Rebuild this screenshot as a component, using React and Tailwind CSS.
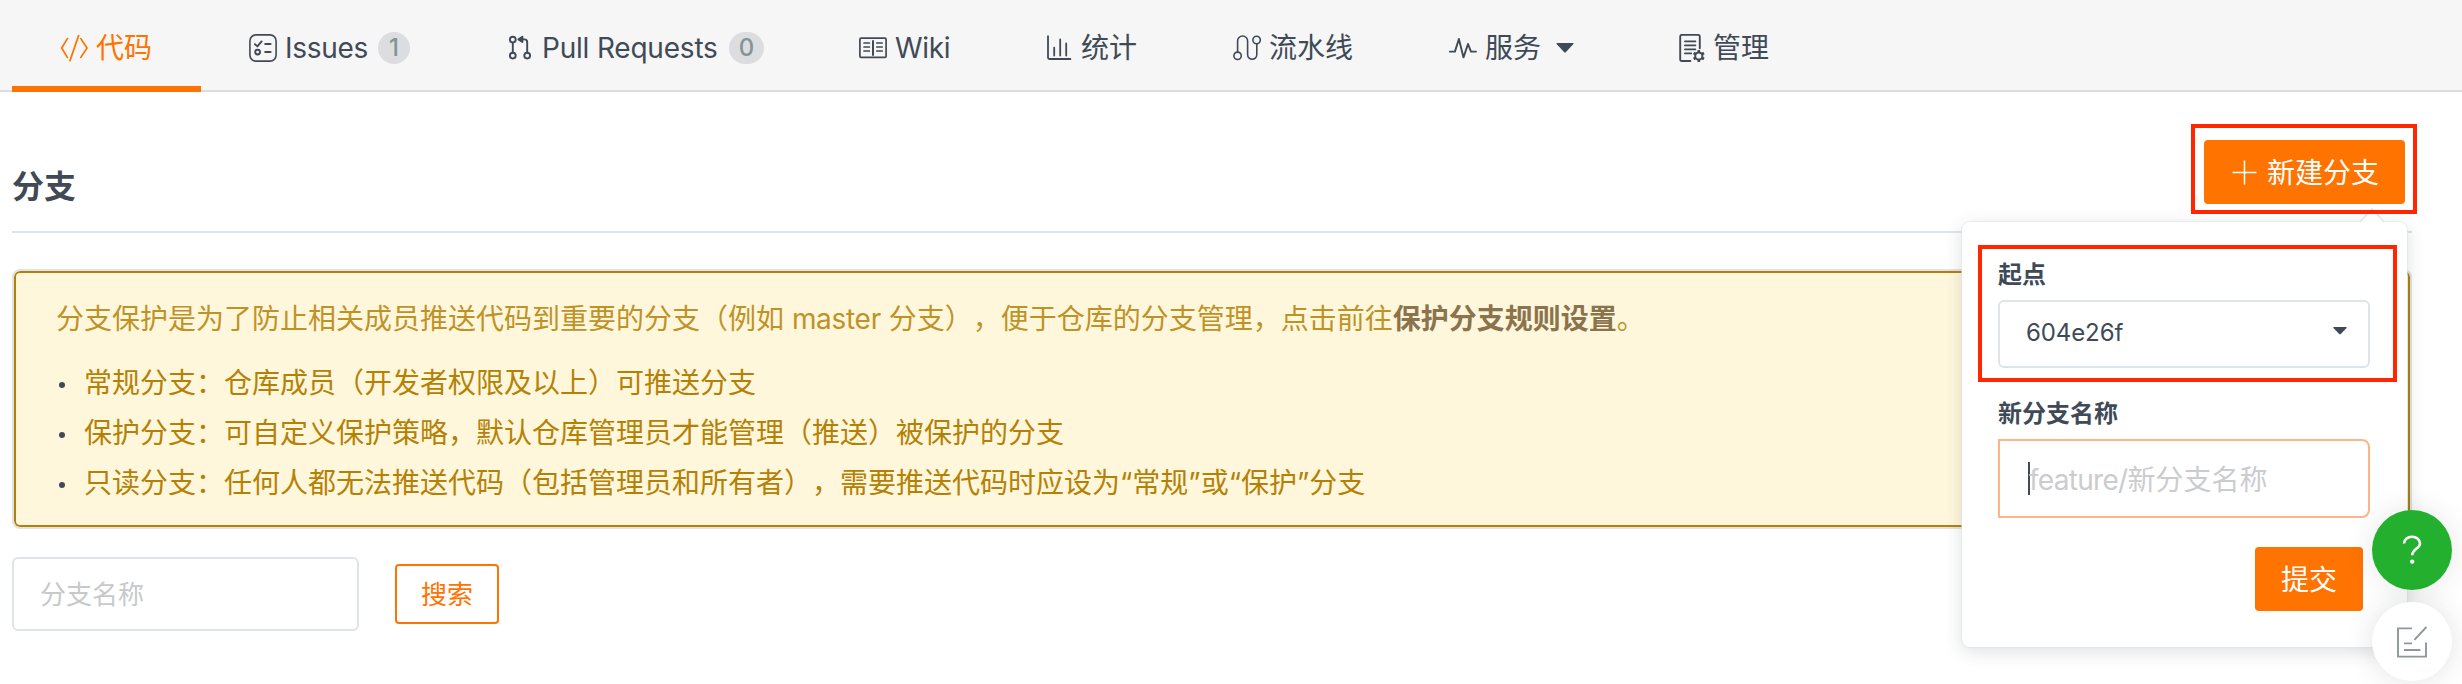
import React from "react";

const stroke = { fill: "none", stroke: "currentColor", strokeWidth: 1.8, strokeLinecap: "round", strokeLinejoin: "round" };

function Icon({ children, ...rest }) {
  return (
    <svg width="28" height="28" viewBox="0 0 28 28" className="shrink-0" {...stroke} {...rest}>
      {children}
    </svg>
  );
}

const CodeIcon = () => (
  <Icon strokeWidth="1.7">
    <path d="M7.4 4.6 1.7 14l5.7 9.4M20.8 4.6 27 14l-6.2 9.4M18.6 1.6 10 26.6" />
  </Icon>
);

const IssuesIcon = () => (
  <Icon strokeWidth="1.6">
    <rect x="0.9" y="0.9" width="26.2" height="26.2" rx="6" />
    <path strokeWidth="1.9" d="M6 10.2l2.4 2.2 4.2-5M16.2 10h5.4M16.2 18h5.4" />
    <circle cx="8.6" cy="18.1" r="2.4" strokeWidth="1.9" />
  </Icon>
);

const PullIcon = () => (
  <Icon strokeWidth="1.9">
    <circle cx="6.8" cy="5.6" r="2.9" />
    <circle cx="6.8" cy="21.6" r="2.9" />
    <circle cx="21.2" cy="21.6" r="2.9" />
    <path d="M6.8 8.6v10M21.2 18.6V8.2a2.8 2.8 0 0 0-2.8-2.8H15.6" />
    <path d="M16.4 2.8v5.2l-4-2.6z" fill="currentColor" />
  </Icon>
);

const WikiIcon = () => (
  <Icon strokeWidth="1.7">
    <rect x="0.9" y="4.2" width="26.2" height="19.2" rx="1.2" />
    <path strokeWidth="2" d="M14 7v14" />
    <path d="M5 9h5.4M5 13h5.4M5 17h5.4M17.8 9h5.4M17.8 13h5.4M17.8 17h5.4" />
  </Icon>
);

const StatsIcon = () => (
  <Icon strokeWidth="1.8">
    <path d="M3 2.2v21.4q0 1.4 1.4 1.4h21M9.2 21.6v-8M15.2 21.6V5.4M21.2 21.6V9.4" />
  </Icon>
);

const PipelineIcon = () => (
  <Icon strokeWidth="1.6">
    <circle cx="4.6" cy="21.8" r="3.7" />
    <circle cx="23.6" cy="6" r="3.7" />
    <path d="M4.6 18V7a5 5 0 0 1 10 0v13.6a4.6 4.6 0 0 0 9.2 0V9.8" />
  </Icon>
);

const PulseIcon = () => (
  <Icon strokeWidth="1.9">
    <path d="M.9 17.6h5L9.9 5l4.6 18.4L19 10l3 7.6h5" />
  </Icon>
);

const ManageIcon = () => (
  <Icon strokeWidth="1.9">
    <path d="M13.4 27H5q-1.8 0-1.8-1.8V2.8Q3.2.9 5 .9h16q1.8 0 1.8 1.8v11.6" />
    <path strokeWidth="1.8" d="M8 7.4h10.4M8 11.4h10.4M8 15.4h10.4M8 19.4h6.2" />
    <circle cx="21.8" cy="22" r="3.6" strokeWidth="2" />
    <path strokeWidth="2.6" strokeLinecap="butt" d="M21.8 16v2.4M21.8 25.6V28M16.6 19l2.1 1.2M24.9 23.8l2.1 1.2M16.6 25l2.1-1.2M24.9 20.2l2.1-1.2" />
  </Icon>
);

function Caret({ className }) {
  return (
    <svg viewBox="0 0 18 10" className={className} fill="currentColor">
      <path d="M1 0h16q1 0 .4 1L10 9q-1 1-2 0L.6 1Q0 0 1 0z" />
    </svg>
  );
}

function Badge({ className, children }) {
  return (
    <span className={"flex h-8 items-center justify-center rounded-full bg-[#dcdde0] text-[24px] font-medium text-[#879296] " + className}>
      {children}
    </span>
  );
}

function NavItem({ icon, label, className, labelClass = "", active, children }) {
  return (
    <a
      className={
        "flex h-[92px] shrink-0 items-center border-b-[6px] pl-12 whitespace-nowrap " +
        (active ? "border-[#ff7300] text-[#ff7300] " : "border-transparent ") +
        className
      }
    >
      <span className="flex items-center pt-[9px]">
        {icon}
        <span className={"ml-2 leading-7 " + labelClass}>{label}</span>
        {children}
      </span>
    </a>
  );
}

const rules = [
  "常规分支：仓库成员（开发者权限及以上）可推送分支",
  "保护分支：可自定义保护策略，默认仓库管理员才能管理（推送）被保护的分支",
  "只读分支：任何人都无法推送代码（包括管理员和所有者），需要推送代码时应设为“常规”或“保护”分支",
];

function BranchPopup() {
  return (
    <div className="absolute top-[82px] right-[-2px] z-10 h-[425px] w-[445px] rounded-lg bg-white pt-[41px] pl-9 shadow-[0_0_0_1px_rgba(223,228,232,0.6),0_4px_18px_rgba(40,50,60,0.16)]">
      <svg className="absolute -top-[14px] left-[396px] h-4 w-7" viewBox="0 0 28 16">
        <path d="M2 14 14 1l12 13v2H2z" fill="#fff" />
        <path d="M2 14 14 1l12 13" fill="none" stroke="#dfe4e8" strokeWidth="1.5" />
      </svg>
      <div className="absolute top-[23px] left-4 z-10 h-[137px] w-[419px] border-4 border-[#ff2600]" />
      <label className="block text-[24px] leading-6 font-bold">起点</label>
      <div className="mt-[13px] flex h-[68px] w-[372px] items-center justify-between rounded-md border-2 border-[#dfe4e8] pr-[21px] pb-[2px] pl-[26px] text-[24px]">
        <span className="tracking-[-0.1px]">604e26f</span>
        <Caret className="mb-[5px] h-2 w-[14px]" />
      </div>
      <label className="mt-[34px] block text-[24px] leading-6 font-bold">新分支名称</label>
      <div className="mt-[13px] flex h-[79px] w-[372px] items-center rounded-r-lg border-2 border-[#ffb587] pl-7">
        <span className="h-[33px] w-[2px] bg-[#404a57]" />
        <span className="-ml-[1px] pt-[2px] text-[28px] leading-8 text-[#cbccce]">
          <span className="tracking-[-0.7px]">feature/</span>新分支名称
        </span>
      </div>
      <button className="mt-[29px] ml-[257px] block h-16 w-[108px] rounded-sm bg-[#ff7300] pt-[1px] text-[28px] text-white">提交</button>
    </div>
  );
}

export default function App() {
  return (
    <div
      lang="zh-CN"
      className="relative flex h-[684px] w-[2462px] flex-col overflow-hidden bg-white font-[Inter,'Noto_Sans_CJK_SC',sans-serif] text-[28px] text-[#404a57] [text-spacing-trim:space-all]"
    >
      <nav className="flex h-[92px] shrink-0 bg-[#f6f6f6] pl-3 shadow-[inset_0_-2px_0_#dcdddf]">
        <NavItem active icon={<CodeIcon />} label="代码" className="w-[189px]" />
        <NavItem icon={<IssuesIcon />} label="Issues" className="w-[257px]" labelClass="w-[93px] tracking-[-0.3px]">
          <Badge className="w-8">1</Badge>
        </NavItem>
        <NavItem icon={<PullIcon />} label="Pull Requests" className="w-[353px]" labelClass="-ml-px w-[187px] tracking-[-0.2px]">
          <Badge className="w-[35px]">0</Badge>
        </NavItem>
        <NavItem icon={<WikiIcon />} label="Wiki" className="w-[186px]" labelClass="tracking-[-0.3px]" />
        <NavItem icon={<StatsIcon />} label="统计" className="w-[188px]" />
        <NavItem icon={<PipelineIcon />} label="流水线" className="w-[216px]" />
        <NavItem icon={<PulseIcon />} label="服务" className="w-[228px]">
          <Caret className="ml-[15px] h-[10px] w-[18px]" />
        </NavItem>
        <NavItem icon={<ManageIcon />} label="管理" className="w-[188px]" />
      </nav>

      <main className="flex w-[2412px] flex-col pl-3">
        <header className="flex h-[141px] items-start justify-between border-b-2 border-[#dfe4e8] pt-12">
          <h1 className="mt-[30px] text-[32px] leading-[34px] font-semibold">分支</h1>
          <div className="relative mr-[7px]">
            <button className="flex h-16 w-[201px] items-center rounded-sm bg-[#ff7300] pl-7 text-[28px] whitespace-nowrap text-white">
              <svg width="25" height="25" viewBox="0 0 25 25" className="mr-[10px] shrink-0" stroke="currentColor" strokeWidth="1.5">
                <path d="M12.5.5v24M.5 12.5h24" />
              </svg>
              <span className="pt-[1px]">新建分支</span>
            </button>
            <BranchPopup />
            <div className="absolute -top-4 -left-[13px] z-20 h-[90px] w-[226px] border-4 border-[#ff2600]" />
          </div>
        </header>

        <section className="mt-9 h-[260px] rounded-lg border-2 border-[#dfe4e8] bg-[#fff7dc] pt-8 pl-[42px] text-[#b58105] shadow-[inset_0_0_0_2px_#b58105]">
          <p className="leading-8 whitespace-nowrap opacity-85">
            分支保护是为了防止相关成员推送代码到重要的分支（例如 <span className="tracking-[-0.3px]">master</span> 分支），便于仓库的分支管理，点击前往
            <b className="font-bold text-[#775d33]">保护分支规则设置</b>。
          </p>
          <ul className="mt-[23px]">
            {rules.map((rule) => (
              <li key={rule} className="flex h-[50px] items-center whitespace-nowrap">
                <span className="mt-[3px] mr-[19px] ml-[3px] h-[6px] w-[6px] rounded-full bg-[#404a57]" />
                {rule}
              </li>
            ))}
          </ul>
        </section>

        <form className="mt-7 flex items-center gap-9">
          <div className="flex h-[74px] w-[347px] items-center rounded-md border-2 border-[#dfe4e8] pt-[1px] pl-[26px] text-[26px] text-[#c7c9ca]">分支名称</div>
          <button type="button" className="h-[60px] w-[104px] rounded-sm border-2 border-[#ff7300] pt-[1px] text-[26px] leading-none text-[#ff7300]">
            搜索
          </button>
        </form>
      </main>

      <aside className="absolute top-[510px] left-[2372px] z-30 flex flex-col gap-3">
        <button className="flex h-20 w-20 items-center justify-center rounded-full bg-[#23b02e] text-white shadow-[0_0_28px_rgba(40,50,60,0.12)]">
          <svg width="20" height="30" viewBox="0 0 20 30" fill="none" stroke="currentColor" strokeWidth="2.6">
            <path d="M2 8.6C2 4.6 5.4 1.8 10 1.8s8 2.8 8 6.6c0 5-7.8 6-7.8 11.8" />
            <circle cx="10.2" cy="26.6" r="2.2" fill="currentColor" stroke="none" />
          </svg>
        </button>
        <button className="flex h-[79px] w-20 items-center justify-center rounded-full bg-white text-[#8f979b] shadow-[0_0_28px_rgba(40,50,60,0.14)]">
          <svg width="32" height="32" viewBox="0 0 32 32" fill="none" stroke="currentColor" strokeWidth="1.9">
            <path d="M16 2.4H2v28.2h28V16.4M30.4 1 18.4 13.8M8 17.4h8M8 24h16.4" />
          </svg>
        </button>
      </aside>
    </div>
  );
}
